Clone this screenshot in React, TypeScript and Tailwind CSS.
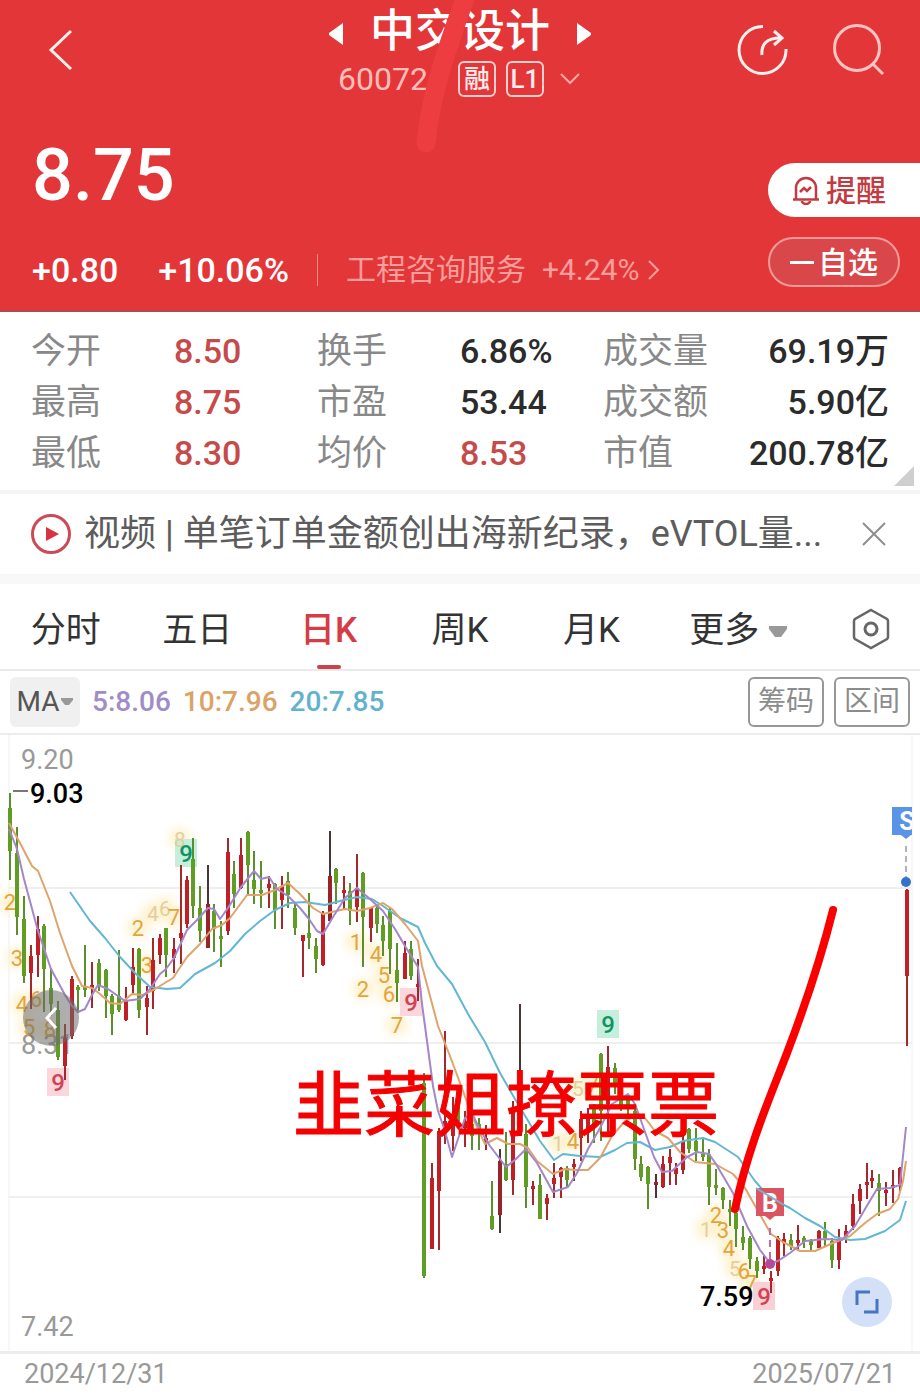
import { useState } from "react";
import type { ReactNode } from "react";

type Tone = "up" | "down" | "dark";

// x, high, low, body top, body bottom
type Candle = [number, number, number, number, number, Tone];

type Mark = {
  x: number;
  y: number;
  n: string;
};

const candles: Candle[] = [
  [10, 792, 879, 807, 850, "down"],
  [17, 826, 934, 852, 916, "down"],
  [24, 895, 982, 918, 975, "down"],
  [31, 944, 1008, 955, 972, "up"],
  [38, 915, 976, 928, 954, "up"],
  [44, 923, 1011, 925, 968, "down"],
  [51, 967, 1015, 987, 1003, "down"],
  [58, 1000, 1059, 1009, 1056, "down"],
  [65, 1023, 1079, 1037, 1065, "up"],
  [72, 975, 1038, 978, 1035, "up"],
  [78, 984, 1012, 986, 989, "down"],
  [85, 944, 996, 986, 988, "down"],
  [92, 961, 1007, 984, 987, "up"],
  [99, 958, 990, 962, 985, "down"],
  [106, 968, 1017, 969, 995, "down"],
  [112, 993, 1034, 995, 1013, "down"],
  [119, 949, 1011, 995, 1009, "down"],
  [126, 986, 1020, 1000, 1019, "up"],
  [133, 947, 992, 966, 984, "up"],
  [139, 947, 1017, 948, 1009, "down"],
  [147, 985, 1034, 997, 1006, "up"],
  [153, 937, 1008, 959, 990, "up"],
  [160, 933, 963, 937, 954, "up"],
  [166, 927, 976, 927, 954, "down"],
  [174, 937, 972, 948, 957, "up"],
  [181, 864, 963, 932, 937, "up"],
  [187, 875, 927, 879, 923, "up"],
  [193, 837, 917, 858, 905, "down"],
  [200, 885, 941, 907, 930, "down"],
  [208, 864, 947, 903, 947, "dark"],
  [214, 903, 951, 910, 928, "down"],
  [221, 920, 966, 935, 937, "down"],
  [228, 837, 934, 851, 930, "up"],
  [234, 860, 907, 873, 893, "down"],
  [241, 837, 888, 854, 887, "up"],
  [248, 830, 895, 831, 864, "down"],
  [254, 850, 903, 879, 888, "down"],
  [261, 860, 907, 889, 892, "down"],
  [269, 875, 907, 883, 887, "up"],
  [275, 882, 928, 883, 909, "down"],
  [282, 875, 928, 885, 899, "up"],
  [288, 871, 907, 880, 894, "down"],
  [295, 901, 934, 907, 927, "down"],
  [303, 934, 976, 934, 940, "up"],
  [309, 892, 948, 932, 937, "down"],
  [316, 937, 972, 945, 958, "down"],
  [323, 910, 965, 913, 964, "up"],
  [330, 830, 920, 875, 920, "dark"],
  [336, 867, 903, 868, 882, "down"],
  [344, 875, 908, 889, 892, "up"],
  [350, 882, 924, 890, 910, "down"],
  [357, 853, 921, 887, 906, "up"],
  [363, 871, 966, 872, 916, "down"],
  [371, 906, 941, 907, 927, "up"],
  [377, 905, 932, 907, 923, "down"],
  [383, 915, 955, 924, 940, "down"],
  [390, 907, 973, 910, 948, "down"],
  [397, 942, 1001, 969, 982, "down"],
  [405, 940, 978, 952, 978, "up"],
  [411, 940, 979, 948, 975, "down"],
  [418, 958, 1000, 983, 985, "up"],
  [424, 1072, 1277, 1082, 1275, "down"],
  [432, 1162, 1248, 1177, 1248, "up"],
  [439, 1127, 1249, 1130, 1190, "up"],
  [445, 1030, 1143, 1120, 1130, "up"],
  [453, 1096, 1150, 1113, 1135, "up"],
  [458, 1100, 1127, 1103, 1120, "down"],
  [465, 1110, 1146, 1120, 1127, "up"],
  [472, 1113, 1149, 1123, 1135, "down"],
  [479, 1117, 1149, 1123, 1133, "down"],
  [486, 1124, 1149, 1137, 1142, "up"],
  [492, 1180, 1229, 1215, 1228, "down"],
  [500, 1148, 1232, 1160, 1214, "dark"],
  [506, 1131, 1180, 1163, 1179, "down"],
  [513, 1100, 1194, 1110, 1179, "up"],
  [520, 1003, 1135, 1127, 1135, "dark"],
  [526, 1123, 1207, 1133, 1186, "down"],
  [533, 1180, 1204, 1185, 1187, "up"],
  [540, 1173, 1218, 1184, 1218, "down"],
  [547, 1193, 1219, 1197, 1203, "up"],
  [554, 1162, 1197, 1177, 1183, "up"],
  [561, 1166, 1197, 1167, 1176, "up"],
  [567, 1165, 1187, 1167, 1179, "down"],
  [574, 1158, 1180, 1163, 1165, "up"],
  [581, 1110, 1160, 1118, 1137, "up"],
  [588, 1107, 1142, 1117, 1127, "up"],
  [594, 1103, 1142, 1105, 1127, "down"],
  [601, 1052, 1140, 1053, 1110, "down"],
  [608, 1045, 1133, 1066, 1103, "up"],
  [615, 1062, 1093, 1067, 1085, "down"],
  [621, 1092, 1110, 1096, 1104, "down"],
  [628, 1093, 1113, 1098, 1108, "down"],
  [635, 1105, 1169, 1110, 1158, "down"],
  [641, 1155, 1180, 1163, 1176, "down"],
  [648, 1165, 1208, 1166, 1183, "down"],
  [656, 1173, 1197, 1181, 1183, "dark"],
  [663, 1155, 1187, 1163, 1186, "up"],
  [670, 1148, 1184, 1156, 1162, "up"],
  [676, 1162, 1184, 1167, 1173, "up"],
  [683, 1132, 1173, 1140, 1169, "up"],
  [689, 1127, 1152, 1128, 1148, "down"],
  [696, 1127, 1160, 1140, 1150, "down"],
  [703, 1137, 1160, 1153, 1155, "down"],
  [709, 1148, 1204, 1153, 1186, "down"],
  [716, 1168, 1194, 1184, 1186, "down"],
  [723, 1186, 1208, 1187, 1199, "down"],
  [730, 1199, 1225, 1208, 1211, "down"],
  [736, 1209, 1246, 1212, 1228, "down"],
  [743, 1225, 1249, 1236, 1242, "down"],
  [750, 1235, 1268, 1237, 1258, "down"],
  [757, 1256, 1277, 1260, 1270, "down"],
  [764, 1255, 1273, 1265, 1267, "up"],
  [771, 1270, 1292, 1277, 1280, "up"],
  [778, 1235, 1275, 1237, 1270, "up"],
  [784, 1232, 1255, 1238, 1242, "up"],
  [791, 1233, 1249, 1239, 1245, "down"],
  [798, 1224, 1250, 1239, 1242, "up"],
  [804, 1235, 1247, 1237, 1241, "down"],
  [811, 1238, 1249, 1240, 1244, "down"],
  [819, 1229, 1247, 1230, 1247, "up"],
  [825, 1221, 1245, 1230, 1237, "down"],
  [832, 1237, 1267, 1240, 1259, "down"],
  [839, 1228, 1268, 1240, 1259, "up"],
  [846, 1224, 1242, 1230, 1237, "up"],
  [853, 1193, 1229, 1203, 1225, "up"],
  [860, 1183, 1213, 1188, 1200, "up"],
  [867, 1162, 1198, 1181, 1183, "up"],
  [872, 1169, 1187, 1177, 1179, "up"],
  [879, 1173, 1215, 1182, 1190, "down"],
  [886, 1181, 1205, 1189, 1191, "up"],
  [893, 1169, 1202, 1184, 1187, "up"],
  [900, 1166, 1190, 1167, 1183, "up"],
  [907, 888, 1045, 889, 975, "up"],
];

const bodyColor: Record<Tone, string> = {
  up: "#c01f26",
  down: "#5f9e22",
  dark: "#98242a",
};

const wickColor: Record<Tone, string> = {
  up: "#a5282c",
  down: "#5b8f2c",
  dark: "#4d3236",
};

const ma5 =
  "9,828 17,848 24,878 38,930 51,968 65,994 72,1005 78,1011 85,1008 92,994 98,984 108,988 125,1000 140,998 150,988 160,973 166,968 174,957 187,929 197,919 208,907 214,908 220,918 228,907 241,886 254,870 261,878 269,876 277,888 288,895 300,907 309,918 317,930 323,933 333,916 345,897 357,887 370,898 383,910 395,928 405,945 418,966 422,1003 427,1040 433,1085 438,1110 445,1130 452,1156 465,1117 472,1112 479,1127 490,1145 506,1166 516,1158 526,1148 537,1162 553,1191 568,1186 577,1172 588,1148 600,1127 612,1103 628,1093 635,1103 640,1117 654,1156 662,1171 672,1170 687,1156 697,1151 709,1153 716,1163 733,1192 747,1225 760,1249 770,1262 778,1260 790,1252 805,1240 825,1238 842,1239 855,1225 868,1203 877,1188 890,1187 900,1184 906,1126";
const ma10 =
  "9,822 20,842 32,865 38,870 50,900 60,932 72,965 82,985 92,987 100,993 110,1002 120,1003 132,993 143,994 155,988 173,977 187,956 200,943 212,928 222,924 230,917 247,894 262,894 275,889 288,882 300,893 313,907 323,913 345,908 357,910 370,907 383,902 392,908 405,923 418,940 422,965 430,995 438,1025 450,1055 463,1090 472,1115 485,1143 497,1137 508,1143 520,1143 528,1147 537,1160 553,1173 565,1168 575,1169 588,1169 600,1157 612,1135 625,1120 637,1114 645,1117 655,1130 668,1137 680,1151 695,1161 715,1163 733,1173 745,1187 758,1210 771,1233 783,1241 800,1250 815,1250 833,1242 850,1235 865,1222 877,1213 890,1208 898,1198 903,1180 906,1160";
const ma20 =
  "70,891 90,920 105,937 120,956 135,972 150,986 167,988 180,987 195,973 215,962 230,950 245,933 260,920 275,909 290,902 305,901 325,904 340,900 357,896 372,898 383,905 400,917 418,926 425,942 437,965 452,983 468,1013 485,1041 500,1072 515,1098 527,1118 540,1140 554,1159 563,1153 580,1155 600,1156 615,1149 627,1142 640,1141 655,1149 670,1146 683,1140 703,1137 715,1141 738,1156 755,1180 770,1197 790,1207 805,1217 820,1225 835,1236 850,1239 865,1238 885,1230 900,1219 906,1200";

const faintMarks: Mark[] = [
  { x: 180, y: 838, n: "8" },
  { x: 153, y: 912, n: "4" },
  { x: 165, y: 907, n: "6" },
  { x: 578, y: 1087, n: "5" },
  { x: 558, y: 1142, n: "1" },
  { x: 706, y: 1228, n: "1" },
  { x: 735, y: 1267, n: "5" },
];

const marks: Mark[] = [
  { x: 10, y: 901, n: "2" },
  { x: 17, y: 957, n: "3" },
  { x: 22, y: 1003, n: "4" },
  { x: 36, y: 998, n: "6" },
  { x: 29, y: 1026, n: "5" },
  { x: 50, y: 1028, n: "8" },
  { x: 138, y: 927, n: "2" },
  { x: 147, y: 964, n: "3" },
  { x: 174, y: 916, n: "7" },
  { x: 356, y: 941, n: "1" },
  { x: 363, y: 988, n: "2" },
  { x: 376, y: 953, n: "4" },
  { x: 384, y: 974, n: "5" },
  { x: 389, y: 993, n: "6" },
  { x: 397, y: 1024, n: "7" },
  { x: 593, y: 1083, n: "7" },
  { x: 573, y: 1140, n: "4" },
  { x: 716, y: 1214, n: "2" },
  { x: 723, y: 1229, n: "3" },
  { x: 729, y: 1247, n: "4" },
  { x: 744, y: 1270, n: "6" },
  { x: 751, y: 1282, n: "7" },
];

const nines = [
  { x: 186, y: 852, color: "#129263", bg: "#c5eedc" },
  { x: 58, y: 1081, color: "#cf4357", bg: "#fbd6db" },
  { x: 411, y: 1001, color: "#cf4357", bg: "#fbd6db" },
  { x: 608, y: 1023, color: "#129263", bg: "#c5eedc" },
  { x: 764, y: 1295, color: "#cf4357", bg: "#fbd0d5" },
];

const quoteRows = [
  [
    { label: "今开", value: "8.50", red: true },
    { label: "换手", value: "6.86%", red: false },
    { label: "成交量", value: "69.19万", red: false },
  ],
  [
    { label: "最高", value: "8.75", red: true },
    { label: "市盈", value: "53.44", red: false },
    { label: "成交额", value: "5.90亿", red: false },
  ],
  [
    { label: "最低", value: "8.30", red: true },
    { label: "均价", value: "8.53", red: true },
    { label: "市值", value: "200.78亿", red: false },
  ],
];

const tabs = ["分时", "五日", "日K", "周K", "月K"];

function Tag({ children }: { children: ReactNode }) {
  return (
    <span className="flex h-9 w-[38px] items-center justify-center rounded-md border-2 border-[#ffd0cf] text-[26px] leading-none font-medium text-[#ffecec]">
      {children}
    </span>
  );
}

function Header() {
  return (
    <header className="relative border-b-2 border-[#b04a48] bg-[#e33638] pb-[18px] text-white">
      <div className="grid h-[100px] grid-cols-[1fr_auto_1fr] items-center">
        <button type="button" aria-label="返回" className="ml-[46px] w-8">
          <svg viewBox="0 0 32 44" className="h-11 w-8" fill="none" stroke="#fff0ee" strokeWidth="3">
            <path d="M25 3 5 22 25 41" />
          </svg>
        </button>

        <div className="flex flex-col items-center">
          <div className="flex items-center gap-[26px]">
            <button type="button" aria-label="上一只">
              <svg viewBox="0 0 16 24" className="mt-2 h-6 w-4" fill="#fff">
                <path d="M15 1v22L1 13v-2z" />
              </svg>
            </button>
            <h1 className="pt-1 text-[45px] leading-[54px] font-medium">中交设计</h1>
            <button type="button" aria-label="下一只">
              <svg viewBox="0 0 16 24" className="mt-2 h-6 w-4" fill="#fff">
                <path d="M1 1v22l14-10v-2z" />
              </svg>
            </button>
          </div>
          <div className="flex items-center gap-2.5">
            <span className="mr-5 text-[32px] leading-10 text-[#ffbdba]">60072</span>
            <Tag>融</Tag>
            <Tag>L1</Tag>
            <button type="button" aria-label="展开" className="ml-1">
              <svg viewBox="0 0 24 14" className="h-3.5 w-6" fill="none" stroke="#ffa9a6" strokeWidth="2">
                <path d="m3 2 9 9 9-9" />
              </svg>
            </button>
          </div>
        </div>

        <div className="mr-9 flex items-center justify-end gap-11">
          <button type="button" aria-label="分享">
            <svg viewBox="0 0 52 52" className="size-[52px]" fill="none" stroke="#fff0ee" strokeWidth="3">
              <path d="M27 2.500A23.500 23.500 0 1 0 50 25" />
              <path d="M26 31c-1-11 5-17 18-17" />
              <path d="m38 7 8 7-8 7" />
            </svg>
          </button>
          <button type="button" aria-label="搜索">
            <svg viewBox="0 0 52 52" className="size-[52px]" fill="none" stroke="#ffc4c2" strokeWidth="3">
              <circle cx="25" cy="24" r="22.500" />
              <path d="m41 40 10 10" />
            </svg>
          </button>
        </div>
      </div>

      <div className="flex">
        <div className="flex flex-1 flex-col pl-8">
          <p className="mt-9 text-[72px] leading-[80px] font-medium">8.75</p>
          <div className="mt-8 flex items-center text-[34px] leading-[44px] font-medium">
            <span>+0.80</span>
            <span className="ml-10">+10.06%</span>
            <span className="ml-7 h-8 w-px bg-[#f08b8a]" />
            <a href="#industry" className="ml-7 flex items-center text-[30px] font-normal text-[#f99e9b]">
              工程咨询服务
              <span className="ml-4">+4.24%</span>
              <svg viewBox="0 0 14 24" className="ml-2 h-6 w-3.5" fill="none" stroke="#f99e9b" strokeWidth="2">
                <path d="m2 3 9 9-9 9" />
              </svg>
            </a>
          </div>
        </div>

        <div className="mt-[63px] flex w-[152px] flex-col items-start gap-5">
          <button
            type="button"
            className="flex h-[54px] w-full items-center gap-1.5 rounded-l-full bg-white pl-6 text-[30px] font-medium text-[#c23b42]"
          >
            <svg viewBox="0 0 28 30" className="h-[30px] w-7" fill="none" stroke="#c23b42" strokeWidth="2.500">
              <path d="M4 24V13a10 10 0 0 1 20 0v11" />
              <path d="M1 24.500h26" />
              <path d="M10 26a4 3 0 0 0 8 0" />
              <path d="m8 17 4-4 3 3 4-4" />
            </svg>
            提醒
          </button>
          <button
            type="button"
            className="flex h-[50px] w-[132px] items-center justify-center rounded-full border-2 border-[#f39a97] bg-[#d9474a] text-[30px] font-medium"
          >
            <span className="mr-1 h-[3px] w-6 bg-white" />
            自选
          </button>
        </div>
      </div>

      <svg viewBox="0 0 60 156" className="absolute top-0 left-[414px] h-[156px] w-[60px]" fill="none">
        <path d="M54-10C36 40 17 90 12 143" stroke="#ee3d40" strokeWidth="19" strokeLinecap="round" />
      </svg>
    </header>
  );
}

function Quotes() {
  return (
    <section className="relative border-b-4 border-[#f5f5f5] px-[31px] pt-3.5 pb-[11px]">
      <table className="w-full table-fixed text-[35px] leading-[51px]">
        <tbody>
          {quoteRows.map((row) => (
            <tr key={row[0].label}>
              {row.map((cell, i) => [
                <th key={cell.label} scope="row" className="text-left font-normal whitespace-nowrap text-[#888]">
                  {cell.label}
                </th>,
                <td
                  key={cell.value}
                  className={`text-[34px] font-medium whitespace-nowrap ${i === 2 ? "text-right" : ""} ${
                    cell.red ? "text-[#c64a4a]" : "text-[#2b2b2b]"
                  }`}
                >
                  {cell.value}
                </td>,
              ])}
            </tr>
          ))}
        </tbody>
      </table>
      <svg viewBox="0 0 20 20" className="absolute right-1.5 bottom-1 size-5" fill="#cfcfcf">
        <path d="M20 0v20H0z" />
      </svg>
    </section>
  );
}

function News() {
  return (
    <section className="flex h-[90px] items-center border-b-[10px] border-[#f8f8f8] pr-[34px] pl-[30px]">
      <svg viewBox="0 0 42 42" className="size-[42px] shrink-0">
        <circle cx="21" cy="21" r="18.500" fill="none" stroke="#cb4a56" strokeWidth="3" />
        <path d="M16 14v14l13-7z" fill="#d8343f" />
      </svg>
      <a href="#news" className="ml-3 min-w-0 flex-1 text-[36px] whitespace-nowrap text-[#5c5c5c]">
        视频 | 单笔订单金额创出海新纪录，eVTOL量...
      </a>
      <button type="button" aria-label="关闭" className="ml-6 shrink-0">
        <svg viewBox="0 0 24 24" className="size-6" fill="none" stroke="#8d8d8d" strokeWidth="2">
          <path d="m1 1 22 22M23 1 1 23" />
        </svg>
      </button>
    </section>
  );
}

function Tabs() {
  const [active, setActive] = useState("日K");

  return (
    <nav className="grid h-[87px] grid-cols-7 border-b-2 border-[#ebebeb] text-[35px] text-[#333]">
      {tabs.map((tab) => (
        <button
          key={tab}
          type="button"
          onClick={() => setActive(tab)}
          className={`relative pt-2.5 ${tab === active ? "font-medium text-[#d63c46]" : ""}`}
        >
          {tab}
          {tab === active && (
            <span className="absolute bottom-0 left-1/2 h-1 w-6 -translate-x-1/2 rounded-full bg-[#c8434d]" />
          )}
        </button>
      ))}
      <button type="button" className="flex items-center gap-2.5 pt-2.5 pl-8 whitespace-nowrap">
        更多
        <svg viewBox="0 0 18 12" className="h-3 w-[18px] shrink-0" fill="#999">
          <path d="M0 0h18v3l-6 8H6L0 3z" />
        </svg>
      </button>
      <button type="button" aria-label="设置" className="flex items-center justify-end pt-1 pr-[30px]">
        <svg viewBox="0 0 38 42" className="h-[42px] w-[38px]" fill="none" stroke="#666" strokeWidth="2.500">
          <path d="M19 2 35 11q1 1 1 2v16q0 1-1 2L19 40 3 31q-1-1-1-2V13q0-1 1-2z" />
          <circle cx="19" cy="21" r="6" strokeWidth="3" />
        </svg>
      </button>
    </nav>
  );
}

function Indicators() {
  return (
    <div className="flex h-16 items-center gap-3 border-b-2 border-[#ececec] px-2.5 text-[28px] font-medium">
      <button type="button" className="flex h-[50px] w-[70px] items-center justify-center gap-0.5 rounded-md bg-[#f0f0f0] font-normal text-[#555]">
        MA
        <svg viewBox="0 0 12 8" className="h-2 w-3 shrink-0" fill="#999">
          <path d="M0 0h12v2L8 7H4L0 2z" />
        </svg>
      </button>
      <span className="text-[#a08cc6]">5:8.06</span>
      <span className="text-[#dca265]">10:7.96</span>
      <span className="text-[#62b2ce]">20:7.85</span>
      <div className="ml-auto flex gap-2.5">
        <button type="button" className="h-[50px] w-[76px] rounded-md border-2 border-[#979797] font-normal text-[#8c8c8c]">
          筹码
        </button>
        <button type="button" className="h-[50px] w-[76px] rounded-md border-2 border-[#979797] font-normal text-[#8c8c8c]">
          区间
        </button>
      </div>
    </div>
  );
}

function Chart() {
  return (
    <section className="relative border-b-[3px] border-[#ececec]">
      <svg viewBox="0 734 920 616" className="block w-full" role="img" aria-label="日K线图">
        <defs>
          <filter id="glow" x="-50%" y="-50%" width="200%" height="200%">
            <feGaussianBlur stdDeviation="5" />
          </filter>
          <clipPath id="plot">
            <rect x="8" y="734" width="904" height="616" />
          </clipPath>
        </defs>

        <g stroke="#efefef" strokeWidth="2">
          <path d="M9 887H912M9 1042H912M9 1196H912" />
          <path d="M9 734V1350M912 734V1350" strokeWidth="1" />
        </g>

        <g fill="#fdeec2" filter="url(#glow)" opacity="0.75">
          {[...faintMarks, ...marks].map((m) => (
            <circle key={`${m.x}-${m.y}`} cx={m.x} cy={m.y} r="11" />
          ))}
        </g>

        <g fontSize="27" fill="#999">
          <text x="21" y="768">9.20</text>
          <text x="21" y="1053">8.31</text>
          <text x="21" y="1335">7.42</text>
        </g>

        {nines.map((m) => (
          <rect key={m.x} x={m.x - 11} y={m.y - 14} width="22" height="28" fill={m.bg} />
        ))}

        <g fontSize="21" textAnchor="middle" fill="#e3cf9c">
          {faintMarks.map((m) => (
            <text key={m.x} x={m.x} y={m.y + 8}>
              {m.n}
            </text>
          ))}
        </g>
        <g fontSize="22" textAnchor="middle" fill="#e2a53c">
          {marks.map((m) => (
            <text key={m.x} x={m.x} y={m.y + 8}>
              {m.n}
            </text>
          ))}
        </g>

        {candles.map(([x, high, low, top, bottom, tone]) => (
          <g key={x}>
            <path d={`M${x} ${high}V${low}`} stroke={wickColor[tone]} strokeWidth="2" />
            <rect x={x - 2} y={top} width="4" height={Math.max(bottom - top, 3)} fill={bodyColor[tone]} />
          </g>
        ))}

        <g fill="none" strokeWidth="2" strokeLinejoin="round">
          <polyline points={ma20} stroke="#62b7d3" />
          <polyline points={ma10} stroke="#dfa36c" />
          <polyline points={ma5} stroke="#a487c9" />
        </g>

        <g fontSize="24" fontWeight="500" textAnchor="middle">
          {nines.map((m) => (
            <text key={m.x} x={m.x} y={m.y + 9} fill={m.color}>
              9
            </text>
          ))}
        </g>

        <path d="M13 790H28" stroke="#777" strokeWidth="2" />
        <g fontSize="27" fontWeight="500" fill="#000">
          <text x="30" y="802">9.03</text>
          <text x="700" y="1305">7.59</text>
        </g>

        {/* buy and sell points */}
        <g>
          <path d="M756 1187h28v28h-9l-5 4-5-4h-9z" fill="#dc5461" />
          <text x="770" y="1211" fontSize="25" fontWeight="700" textAnchor="middle" fill="#fff">
            B
          </text>
          <path d="M756 1187 784 1204" stroke="#7cb2cd" strokeWidth="2" />
          <path d="M770 1227V1258" stroke="#c46ba4" strokeWidth="2" strokeDasharray="7 5" />
          <circle cx="770" cy="1263" r="5" fill="#b8479c" />
        </g>
        <g clipPath="url(#plot)">
          <path d="M892 806h28v28h-9l-5 4-5-4h-9z" fill="#5b93e6" />
          <text x="907" y="829" fontSize="25" fontWeight="700" textAnchor="middle" fill="#fff">
            S
          </text>
        </g>
        <path d="M906 845V876" stroke="#667" strokeWidth="1" strokeDasharray="6 4" />
        <circle cx="906" cy="881" r="5" fill="#3573c9" />

        <text x="293" y="1129" fontSize="71" fill="#f40000" stroke="#f40000" strokeWidth="1">
          韭菜姐撩票票
        </text>
        <path
          d="M833 909C819 965 803 1010 787 1052S748 1146 735 1208"
          fill="none"
          stroke="#fb0000"
          strokeWidth="8"
          strokeLinecap="round"
        />
      </svg>

      <button
        type="button"
        aria-label="向左"
        className="absolute top-[46%] left-[23px] flex size-14 -translate-y-1/2 items-center justify-center rounded-full bg-[#6b6b6b]/55"
      >
        <svg viewBox="0 0 14 24" className="h-6 w-3.5" fill="none" stroke="#fff" strokeWidth="3">
          <path d="m12 2-9 10 9 10" />
        </svg>
      </button>
      <button
        type="button"
        aria-label="全屏"
        className="absolute right-7 bottom-6 flex size-[50px] items-center justify-center rounded-full bg-[#d3e0f8]"
      >
        <svg viewBox="0 0 24 24" className="size-6" fill="none" stroke="#4676bd" strokeWidth="3">
          <path d="M2 15V2h13M22 9v13H9" />
        </svg>
      </button>
    </section>
  );
}

export default function App() {
  return (
    <main className="w-full overflow-hidden bg-white font-[Roboto,'Noto_Sans_CJK_SC',sans-serif]">
      <Header />
      <Quotes />
      <News />
      <Tabs />
      <Indicators />
      <Chart />
      <footer className="flex h-[41px] items-center justify-between px-6 text-[27px] text-[#999]">
        <time>2024/12/31</time>
        <time>2025/07/21</time>
      </footer>
    </main>
  );
}
